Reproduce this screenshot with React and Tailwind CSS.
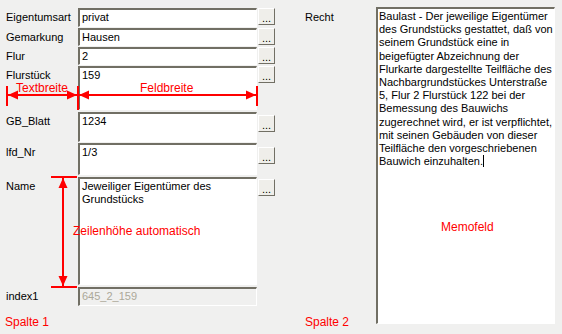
const rows = [
  { label: "Eigentumsart", value: "privat", row: "h-[20px]", field: "h-[19px]", btn: "mt-0" },
  { label: "Gemarkung", value: "Hausen", row: "h-[19px]", field: "h-[18px]", btn: "mt-0" },
  { label: "Flur", value: "2", row: "h-[19px]", field: "h-[18px]", btn: "mt-0" },
  { label: "Flurstück", value: "159", row: "h-[46px]", field: "h-[44px]", btn: "mt-0" },
  { label: "GB_Blatt", value: "1234", row: "h-[31px]", field: "h-[30px]", btn: "mt-[3px]" },
  { label: "lfd_Nr", value: "1/3", row: "h-[34px]", field: "h-[32px]", btn: "mt-[4px]" },
  { label: "Name", value: ["Jeweiliger Eigentümer des", "Grundstücks"], row: "h-[110px]", field: "h-[108px]", btn: "mt-[2px]" },
];

const memoLines = [
  "Baulast - Der jeweilige Eigentümer",
  "des Grundstücks gestattet, daß von",
  "seinem Grundstück eine in",
  "beigefügter Abzeichnung der",
  "Flurkarte dargestellte Teilfläche des",
  "Nachbargrundstückes Unterstraße",
  "5, Flur 2 Flurstück 122 bei der",
  "Bemessung des Bauwichs",
  "zugerechnet wird, er ist verpflichtet,",
  "mit seinen Gebäuden von dieser",
  "Teilfläche den vorgeschriebenen",
];

const DotsButton = ({ className }) => (
  <div
    className={`w-[17px] h-[17px] shrink-0 bg-[#efeeea] border border-t-white border-l-white border-r-[#716f64] border-b-[#716f64] flex items-end justify-center text-[11px] leading-[12px] text-black ${className}`}
  >
    ...
  </div>
);

const Row = ({ r }) => (
  <div className={`flex items-start ${r.row}`}>
    <div className="w-[72px] pt-[3px] leading-[13px]">{r.label}</div>
    <div
      className={`w-[179px] ${r.field} bg-white border-t-2 border-l-2 border-t-[#716f64] border-l-[#716f64] border-r border-b border-r-white border-b-white pl-[2px] pt-[1px] leading-[13px]`}
    >
      {Array.isArray(r.value) ? r.value.map((l) => <div key={l}>{l}</div>) : r.value}
    </div>
    <DotsButton className={`ml-[1px] ${r.btn}`} />
  </div>
);

const App = () => {
  return (
    <div className="relative w-[562px] h-[334px] overflow-hidden bg-[#f0f0ef] text-[11px] text-black font-['Liberation_Sans',Arial,sans-serif]">
      <div className="flex h-full">
        {/* Spalte 1 */}
        <div className="flex flex-col pl-[6px] pt-[8px] w-[299px]">
          {rows.map((r) => (
            <Row key={r.label} r={r} />
          ))}
          <div className="flex items-start h-[20px]">
            <div className="w-[72px] pt-[3px] leading-[13px]">index1</div>
            <div className="w-[179px] h-[19px] bg-[#f0f0ef] border-t-2 border-l-2 border-t-[#716f64] border-l-[#716f64] border-r border-b border-r-white border-b-white pl-[2px] pt-[1px] leading-[13px] text-[#aca899]">
              645_2_159
            </div>
          </div>
          <div className="mt-auto mb-[5px] -ml-[1px] text-[12px] leading-[14px] text-[#ff0000]">Spalte 1</div>
        </div>

        {/* Spalte 2 */}
        <div className="flex pt-[7px] pb-[10px]">
          <div className="w-[77px] flex flex-col justify-between pl-[6px]">
            <div className="pt-[4px] leading-[13px]">Recht</div>
            <div className="mb-[-5px] text-[12px] leading-[14px] text-[#ff0000]">Spalte 2</div>
          </div>
          <div className="relative w-[179px] h-[317px] bg-white border-t-2 border-l-2 border-t-[#716f64] border-l-[#716f64] border-r border-b border-r-white border-b-white pl-[1px] pt-[1px] leading-[13.2px] whitespace-nowrap">
            {memoLines.map((l) => (
              <div key={l}>{l}</div>
            ))}
            <div>
              Bauwich einzuhalten.<span className="inline-block w-px h-[12px] bg-black align-[-2px]" />
            </div>
            <div className="absolute left-[63px] top-[211px] text-[12px] leading-[14px] text-[#ff0000]">Memofeld</div>
          </div>
        </div>
      </div>

      {/* Anmerkungen */}
      <div className="absolute left-[16px] top-[81px] text-[12px] leading-[14px] text-[#ff0000]">Textbreite</div>
      <div className="absolute left-[140px] top-[81px] text-[12px] leading-[14px] text-[#ff0000]">Feldbreite</div>
      <div className="absolute left-[73px] top-[224px] text-[12px] leading-[14px] text-[#ff0000]">Zeilenhöhe automatisch</div>

      <svg className="absolute inset-0 pointer-events-none" width="562" height="334" viewBox="0 0 562 334">
        <g fill="#ff0000" stroke="none">
          <rect x="6" y="86" width="2" height="20" />
          <rect x="77" y="86" width="2" height="24" />
          <rect x="256" y="86" width="2" height="20" />
          <rect x="8" y="94" width="248" height="2" />
          <polygon points="8,95 18,90.5 18,99.5" />
          <polygon points="77,95 67,90.5 67,99.5" />
          <polygon points="79,95 89,90.5 89,99.5" />
          <polygon points="256,95 246,90.5 246,99.5" />

          <rect x="51" y="176" width="26" height="2" />
          <rect x="51" y="286" width="26" height="2" />
          <rect x="62" y="178" width="2" height="108" />
          <polygon points="63,178 58.5,188 67.5,188" />
          <polygon points="63,286 58.5,276 67.5,276" />
        </g>
      </svg>
    </div>
  );
};

export default App;
